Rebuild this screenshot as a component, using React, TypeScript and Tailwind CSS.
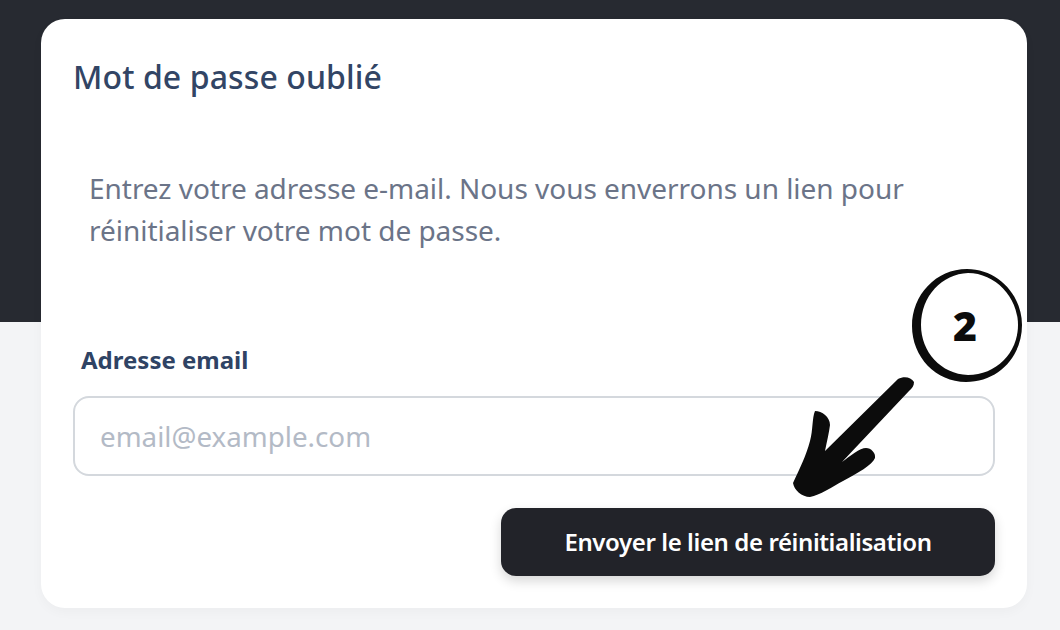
export default function App() {
  return (
    <div className="relative h-[630px] w-[1060px] overflow-hidden bg-[linear-gradient(to_bottom,#272a31_0,#272a31_322px,#f3f4f6_322px,#f3f4f6_100%)] px-[41px] pt-[19px] font-['Noto_Sans',sans-serif]">
      <div className="flex h-[589px] w-[986px] flex-col rounded-[24px] bg-white px-[32px] shadow-[0_4px_12px_rgba(0,0,0,0.03)]">
        <h2 className="mt-[36px] text-[32px] leading-[44px] font-medium tracking-[0.1px] text-[#324565]">Mot de passe oublié</h2>
        <p className="mt-[68px] pl-[16px] text-[28px] leading-[42px] tracking-[-0.03px] text-[#6b7488]">
          Entrez votre adresse e-mail. Nous vous enverrons un lien pour
          <br />
          réinitialiser votre mot de passe.
        </p>
        <label className="mt-[92px] pl-[8px] text-[24px] leading-[34px] font-bold text-[#2f4364]">Adresse email</label>
        <input
          readOnly
          placeholder="email@example.com"
          className="mt-[19px] h-[80px] w-[922px] rounded-[16px] border-2 border-[#d4d8dd] bg-white px-[25px] text-[27.75px] outline-none placeholder:text-[#b3bac6]"
        />
        <div className="mt-[32px] flex justify-end">
          <button className="h-[68px] w-[494px] rounded-[15px] bg-[#222329] text-[24px] font-semibold tracking-[-0.4px] text-white shadow-[0_5px_12px_rgba(0,0,0,0.16)]">
            Envoyer le lien de réinitialisation
          </button>
        </div>
      </div>

      {/* annotation : cercle + flèche */}
      <svg className="absolute top-0 left-0" width="1060" height="630" viewBox="0 0 1060 630">
        <path
          fill="#0c0c0c"
          fillRule="evenodd"
          d="M967 269 C998 269 1022 295 1022 325 C1022 357 998 382 966 382 C936 382 912 357 912 326 C912 295 936 269 967 269 Z M968 273 C942 274 921 296 921 325 C921 352 941 374 968 375 C996 375 1018 353 1018 325 C1018 297 995 273 968 273 Z"
        />
        <path
          fill="#0c0c0c"
          d="M898 379 C904 376 911 377 914 382 C914 386 912 388 909 391 L842 462 C850 456 860 448 866 448 C871 448 876 453 875 458 C872 465 858 473 843 481 C832 487 820 495 810 497 C802 497 794 490 793 483 C800 468 806 456 810 441 C813 430 812 418 815 411 C822 411 830 417 830 425 C829 433 827 441 825 451 Z"
        />
      </svg>
      <div className="absolute top-[299px] left-[945px] w-[40px] text-center text-[41px] leading-[52px] font-black text-[#0c0c0c]">2</div>
    </div>
  );
}
